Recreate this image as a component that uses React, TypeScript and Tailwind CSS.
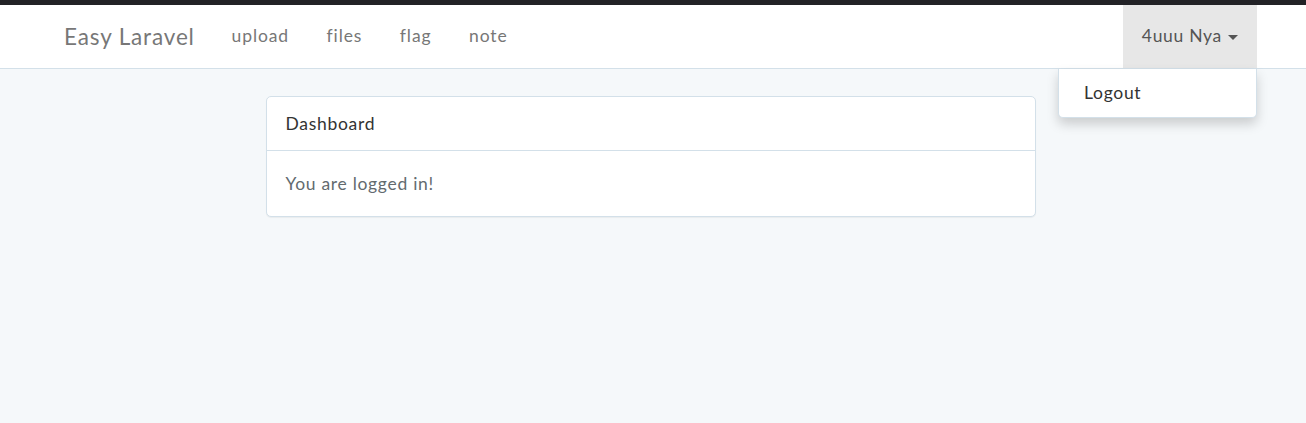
export default function App() {
  return (
    <div className="min-h-[423px] bg-[#f5f8fa] text-[17.5px] tracking-[0.7px] text-[#636b6f]" style={{ fontFamily: 'Lato, "Open Sans", sans-serif' }}>
      <nav className="border-t-[5px] border-[#222226] border-b border-b-[#d3e0e9] bg-white">
        <div className="flex h-[63px] items-stretch justify-between pl-[46px] pr-[49px]">
          <div className="flex items-stretch">
            <a className="flex items-center px-[18px] text-[22.5px] tracking-[0.85px] text-[#777]">Easy Laravel</a>
            <ul className="flex items-stretch">
              {['upload', 'files', 'flag', 'note'].map((item) => (
                <li key={item} className="flex items-center px-[18.75px] tracking-[0.9px] text-[#777]">
                  {item}
                </li>
              ))}
            </ul>
          </div>
          <div className="relative flex items-stretch">
            <div className="flex items-center gap-[6px] bg-[#e7e7e7] px-[19px] text-[#555]">
              <span>4uuu Nya</span>
              <span className="mt-[2px] h-0 w-0 border-x-[5px] border-t-[5px] border-x-transparent border-t-[#555]" />
            </div>
            <div className="absolute right-0 top-[64px] w-[199px] rounded-b-[5px] border border-[#d3e0e9] border-t-0 bg-white py-[6px] shadow-[0_6px_12px_rgba(0,0,0,0.175)]">
              <div className="px-[25px] py-[5px] leading-[26px] text-[#333]">Logout</div>
            </div>
          </div>
        </div>
      </nav>

      <div className="mt-[27px] flex justify-center">
        <div className="ml-[-5px] w-[770px] rounded-[5px] border border-[#d3e0e9] bg-white shadow-[0_1px_1px_rgba(0,0,0,0.05)]">
          <div className="border-b border-[#d3e0e9] px-[19px] py-[13px] leading-[27px] text-[#333]">Dashboard</div>
          <div className="px-[19px] py-[19px] leading-[27px]">You are logged in!</div>
        </div>
      </div>
    </div>
  );
}
